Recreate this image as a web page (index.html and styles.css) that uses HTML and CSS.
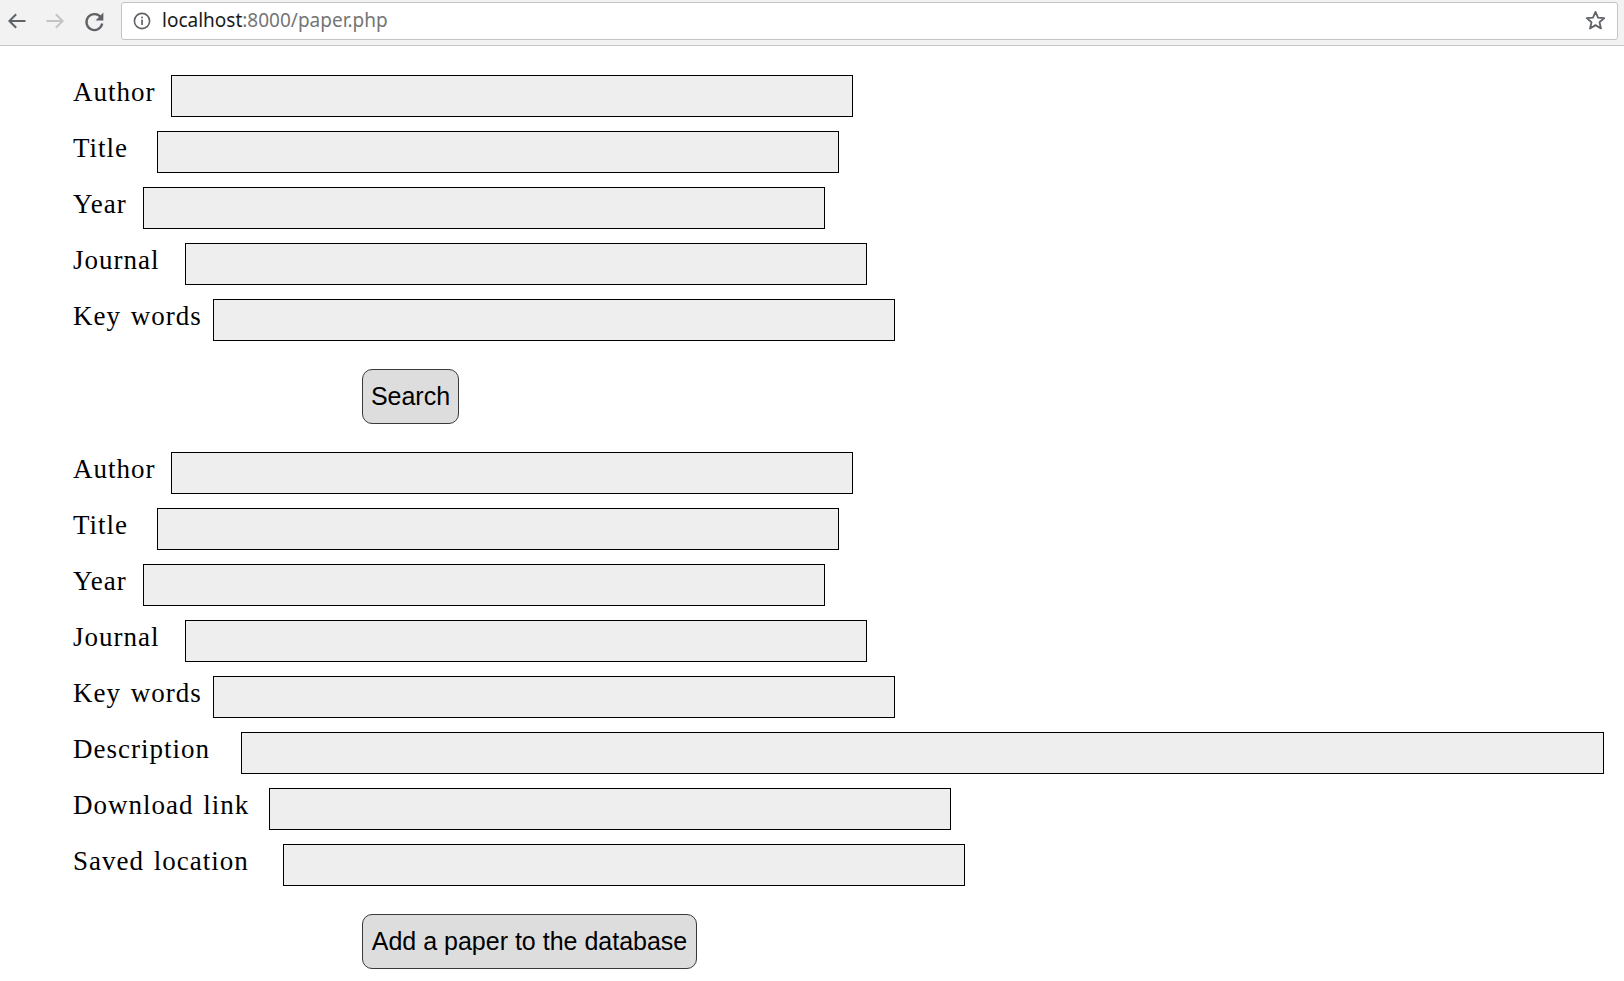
FILE: index.html
```html
<!DOCTYPE html>
<html>
<head>
<meta charset="utf-8">
<title>paper.php</title>
<link rel="stylesheet" href="styles.css">
</head>
<body>
<div class="toolbar">
  <div class="nav">
    <svg class="nav-icon" width="20" height="20" viewBox="0 0 20 20"><path d="M18.5 10H3M9.2 3.2L2.4 10L9.2 16.8" fill="none" stroke="#5f6368" stroke-width="2"/></svg>
    <svg class="nav-icon" width="20" height="20" viewBox="0 0 20 20"><path d="M1.5 10H17M10.8 3.2L17.6 10L10.8 16.8" fill="none" stroke="#c4c4c4" stroke-width="2"/></svg>
    <svg class="nav-icon" width="23" height="23" viewBox="0 0 22 22"><path d="M17.2 7.2A7.6 7.6 0 1 0 18.4 13" fill="none" stroke="#5f6368" stroke-width="2.2"/><path d="M19.5 2.5V10H12Z" fill="#5f6368"/></svg>
  </div>
  <div class="omnibox">
    <svg class="info" width="18" height="18" viewBox="0 0 18 18"><circle cx="9" cy="9" r="7.6" fill="none" stroke="#5f6368" stroke-width="1.6"/><rect x="8.2" y="7.6" width="1.7" height="5.4" fill="#5f6368"/><rect x="8.2" y="4.6" width="1.7" height="1.7" fill="#5f6368"/></svg>
    <span class="url"><span class="host">localhost</span>:8000/paper.php</span>
    <svg class="star" width="21" height="21" viewBox="0 0 20 20"><path d="M10 1.8L12.4 7.3L18.3 7.8L13.8 11.7L15.2 17.6L10 14.4L4.8 17.6L6.2 11.7L1.7 7.8L7.6 7.3Z" fill="none" stroke="#5f6368" stroke-width="1.7" stroke-linejoin="round"/></svg>
  </div>
</div>

<main class="page">
  <form class="paper-form">
    <div class="row"><label class="lbl c6">Author</label><input class="field" type="text"></div>
    <div class="row"><label class="lbl c5">Title</label><input class="field" type="text"></div>
    <div class="row"><label class="lbl c4">Year</label><input class="field" type="text"></div>
    <div class="row"><label class="lbl c7">Journal</label><input class="field" type="text"></div>
    <div class="row"><label class="lbl c9">Key words</label><input class="field" type="text"></div>
    <div class="btn-row"><button class="btn btn-search" type="button">Search</button></div>

    <div class="row"><label class="lbl c6">Author</label><input class="field" type="text"></div>
    <div class="row"><label class="lbl c5">Title</label><input class="field" type="text"></div>
    <div class="row"><label class="lbl c4">Year</label><input class="field" type="text"></div>
    <div class="row"><label class="lbl c7">Journal</label><input class="field" type="text"></div>
    <div class="row"><label class="lbl c9">Key words</label><input class="field" type="text"></div>
    <div class="row"><label class="lbl c11">Description</label><input class="field field-wide" type="text"></div>
    <div class="row"><label class="lbl c13">Download link</label><input class="field" type="text"></div>
    <div class="row"><label class="lbl c14">Saved location</label><input class="field" type="text"></div>
    <div class="btn-row"><button class="btn btn-add" type="button">Add a paper to the database</button></div>
  </form>
</main>
</body>
</html>
```
FILE: styles.css
```css
html, body {
  margin: 0;
  padding: 0;
  background: #ffffff;
}

.toolbar {
  height: 45px;
  background: #f2f2f2;
  border-bottom: 1px solid #c6c6c6;
  display: flex;
  align-items: center;
  padding: 0 6px 0 7px;
  box-sizing: content-box;
}

.nav {
  display: flex;
  align-items: center;
  gap: 18px;
  width: 114px;
  padding-bottom: 3px;
}

.nav-icon {
  display: block;
}

.omnibox {
  flex: 1;
  height: 36px;
  margin-bottom: 4px;
  background: #ffffff;
  border: 1px solid #c4c4c4;
  border-radius: 3px;
  display: flex;
  align-items: center;
  padding: 0 11px 0 11px;
}

.info {
  display: block;
  margin-right: 11px;
}

.url {
  font-family: "Noto Sans", "Open Sans", sans-serif;
  font-size: 19px;
  color: #757575;
  flex: 1;
  white-space: nowrap;
  padding-bottom: 1px;
}

.host {
  color: #1a1a1a;
}

.star {
  display: block;
}

.page {
  padding: 29px 0 0 73px;
}

.paper-form {
  display: flex;
  flex-direction: column;
  gap: 14px;
}

.row {
  display: flex;
  align-items: center;
  height: 42px;
}

.lbl {
  font-family: "Liberation Serif", "DejaVu Serif", serif;
  font-size: 27px;
  letter-spacing: 1px;
  word-spacing: 2px;
  color: #000;
  padding-bottom: 8px;
  white-space: pre;
  flex: none;
}

/* label columns: 14px per character plus one 14px space */
.c4 { width: 70px; }
.c5 { width: 84px; }
.c6 { width: 98px; }
.c7 { width: 112px; }
.c9 { width: 140px; }
.c11 { width: 168px; }
.c13 { width: 196px; }
.c14 { width: 210px; }

.field {
  box-sizing: border-box;
  width: 682px;
  height: 42px;
  margin: 0;
  border: 1px solid #000;
  background: #eeeeee;
  font-size: 18px;
}

.field-wide {
  width: 1363px;
}

.btn-row {
  display: flex;
  margin: 14px 0;
  padding-left: 289px;
}

.btn {
  box-sizing: border-box;
  height: 55px;
  font-family: "Liberation Sans", Arial, sans-serif;
  font-size: 25px;
  color: #000;
  background: #dddddd;
  border: 1px solid #3a3a3a;
  border-radius: 10px;
  padding: 0;
}

.btn-search {
  width: 97px;
}

.btn-add {
  width: 335px;
}
```
